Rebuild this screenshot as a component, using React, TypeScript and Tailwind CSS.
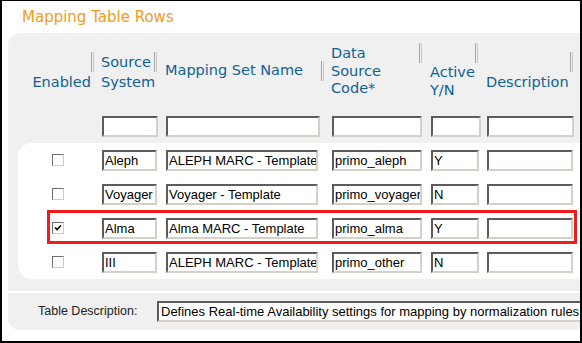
import React from "react";

const inputCls =
  "h-[21px] bg-white border-2 border-t-[#5c5c5c] border-l-[#5c5c5c] border-r-[#d4d0c8] border-b-[#d4d0c8] pl-[1px] text-[13px] leading-[17px] text-black font-['Liberation_Sans',Arial,sans-serif] whitespace-nowrap overflow-hidden";

const rows = [
  { src: "Aleph", name: "ALEPH MARC - Template", code: "primo_aleph", active: "Y", on: false },
  { src: "Voyager", name: "Voyager - Template", code: "primo_voyager", active: "N", on: false },
  { src: "Alma", name: "Alma MARC - Template", code: "primo_alma", active: "Y", on: true },
  { src: "III", name: "ALEPH MARC - Template", code: "primo_other", active: "N", on: false },
];

function Grip() {
  return (
    <span className="flex gap-px h-[20px] shrink-0">
      <span className="w-px h-full bg-[#a3a3a3]" />
      <span className="w-px h-full bg-[#c9c9c9]" />
    </span>
  );
}

function Checkbox({ checked }: { checked: boolean }) {
  return (
    <span className="w-[12px] h-[12px] shrink-0 bg-white border border-t-[#6e6e6e] border-l-[#6e6e6e] border-r-[#cfcbc3] border-b-[#cfcbc3] flex items-center justify-center">
      {checked && (
        <svg width="8" height="8" viewBox="0 0 8 8">
          <path d="M1 3.5 L3 5.5 L7 1.5" fill="none" stroke="#000" strokeWidth="1.6" />
        </svg>
      )}
    </span>
  );
}

export default function App() {
  return (
    <div className="w-[582px] h-[343px] overflow-hidden bg-white border-black border-t border-x-2 border-b-2 font-['DejaVu_Sans',Verdana,sans-serif]">
      <div className="h-[32px] pt-[7px] pl-[20px] text-[15px] leading-[18px] text-[#f39a1e]">
        Mapping Table Rows
      </div>

      <div className="ml-[6px] w-[640px] h-[297px] bg-[#f0f0f0] rounded-l-[12px]">
        {/* column headers */}
        <div className="h-[83px] flex text-[14.5px] text-[#0e6296] whitespace-nowrap">
          <div className="w-[93px] flex justify-end pr-[7px]">
            <span className="mt-[40px] leading-[18px]">Enabled</span>
            <div className="mt-[19px]"><Grip /></div>
          </div>
          <div className="w-[64px] flex">
            <span className="w-[53px] mt-[19px] leading-[20px]">
              Source
              <br />
              System
            </span>
            <div className="mt-[19px]"><Grip /></div>
          </div>
          <div className="w-[166px] flex">
            <span className="w-[156px] mt-[28px] leading-[18px]">Mapping Set Name</span>
            <div className="mt-[28px]"><Grip /></div>
          </div>
          <div className="w-[99px] flex">
            <span className="w-[88px] mt-[12px] leading-[17.5px]">
              Data
              <br />
              Source
              <br />
              Code*
            </span>
            <div className="mt-[10px]"><Grip /></div>
          </div>
          <div className="w-[56px] flex">
            <span className="w-[45px] mt-[30px] leading-[18px]">
              Active
              <br />
              Y/N
            </span>
            <div className="mt-[10px]"><Grip /></div>
          </div>
          <div className="flex">
            <span className="w-[84px] mt-[40px] leading-[18px]">Description</span>
            <div className="mt-[19px]"><Grip /></div>
          </div>
        </div>

        {/* filter inputs */}
        <div className="flex pl-[94px]">
          <div className={`${inputCls} w-[56px]`} />
          <div className={`${inputCls} w-[154px] ml-[8px]`} />
          <div className={`${inputCls} w-[90px] ml-[12px]`} />
          <div className={`${inputCls} w-[50px] ml-[9px]`} />
          <div className={`${inputCls} w-[87px] ml-[6px]`} />
        </div>

        {/* data rows */}
        <div className="mt-[6px] ml-[10px] bg-white rounded-l-[14px]">
          {rows.map((r) => (
            <div key={r.code} className="relative h-[34px] flex items-center pl-[34px]">
              <Checkbox checked={r.on} />
              <div className={`${inputCls} w-[55px] ml-[38px]`}>{r.src}</div>
              <div className={`${inputCls} w-[152px] ml-[9px]`}>{r.name}</div>
              <div className={`${inputCls} w-[90px] ml-[14px]`}>{r.code}</div>
              <div className={`${inputCls} w-[48px] ml-[9px]`}>{r.active}</div>
              <div className={`${inputCls} w-[86px] ml-[8px]`} />
              {r.on && (
                <span className="absolute left-[29px] top-[-1px] w-[530px] h-[34px] border-[3px] border-[#f21b1b]" />
              )}
            </div>
          ))}
        </div>

        <div className="mt-[12px] h-[2px] bg-white" />

        {/* table description */}
        <div className="mt-[8px] flex items-center pl-[30px]">
          <span className="w-[119px] text-[12.5px] text-[#222] font-['Liberation_Sans',Arial,sans-serif]">
            Table Description:
          </span>
          <div className={`${inputCls} w-[480px] pl-[2px]`}>
            Defines Real-time Availability settings for mapping by normalization rules
          </div>
        </div>
      </div>
    </div>
  );
}
